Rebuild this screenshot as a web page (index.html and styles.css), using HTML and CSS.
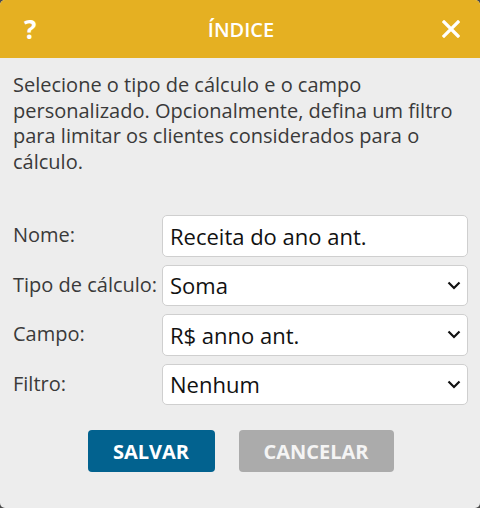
FILE: index.html
```html
<!DOCTYPE html>
<html lang="pt">
  <head>
    <meta charset="UTF-8" />
    <meta name="viewport" content="width=device-width, initial-scale=1.0" />
    <title>Índice</title>
    <link rel="stylesheet" href="styles.css">
  </head>
  <body>
    <div class="dialogo">
      <div class="cabecalho">
        <span class="ajuda">?</span>
        <span class="titulo">ÍNDICE</span>
        <span class="fechar">
          <svg width="18" height="18" viewBox="0 0 18 18">
            <path d="M2 2 L16 16 M16 2 L2 16" stroke="#fff" stroke-width="3.2" stroke-linecap="square" />
          </svg>
        </span>
      </div>
      <div class="conteudo">
        <p class="descricao">
          Selecione o tipo de cálculo e o campo personalizado. Opcionalmente, defina um filtro para limitar os clientes considerados para o cálculo.
        </p>
        <div class="formulario">
          <label for="nome">Nome:</label>
          <input type="text" id="nome" class="campo" value="Receita do ano ant." />

          <label for="tipo">Tipo de cálculo:</label>
          <select id="tipo" class="campo">
            <option>Soma</option>
          </select>

          <label for="campo">Campo:</label>
          <select id="campo" class="campo">
            <option>R$ anno ant.</option>
          </select>

          <label for="filtro">Filtro:</label>
          <select id="filtro" class="campo">
            <option>Nenhum</option>
          </select>
        </div>
        <div class="botoes">
          <button class="botao salvar">SALVAR</button>
          <button class="botao cancelar">CANCELAR</button>
        </div>
      </div>
    </div>
  </body>
</html>
```

FILE: styles.css
```css
* {
  margin: 0;
  padding: 0;
  box-sizing: border-box;
}
html, body {
  width: 480px;
  height: 508px;
  overflow: hidden;
}
body {
  background-color: #4a4a4a;
  font-family: "Open Sans", sans-serif;
}
.dialogo {
  width: 480px;
  height: 508px;
  background-color: #ededed;
  border-radius: 5px;
  overflow: hidden;
}
.cabecalho {
  height: 58px;
  background-color: #e5b022;
  color: white;
  display: flex;
  align-items: center;
  justify-content: space-between;
  padding: 0 20px 0 24px;
}
.ajuda {
  font-size: 26px;
  font-weight: 700;
  width: 18px;
  line-height: 1;
}
.titulo {
  font-size: 20px;
  font-weight: 600;
  padding-right: 2px;
}
.fechar {
  display: flex;
  width: 18px;
}
.conteudo {
  padding: 14px 12px 0 13px;
}
.descricao {
  font-size: 20px;
  line-height: 25.5px;
  color: #3a3a3a;
  margin-bottom: 41px;
  padding-right: 4px;
}
.formulario {
  display: grid;
  grid-template-columns: 149px 306px;
  row-gap: 8px;
  align-items: center;
}
.formulario label {
  font-size: 20px;
  color: #3a3a3a;
  margin-top: -2px;
}
.campo {
  height: 41.5px;
  width: 306px;
  background-color: white;
  border: 1px solid #cfcfcf;
  border-radius: 5px;
  font-family: "Open Sans", sans-serif;
  font-size: 22px;
  color: #111;
  padding: 0 7px;
}
select.campo {
  appearance: none;
  background-image: url("data:image/svg+xml;utf8,<svg xmlns='http://www.w3.org/2000/svg' width='14' height='9' viewBox='0 0 14 9'><path d='M1.5 1.5 L7 7 L12.5 1.5' fill='none' stroke='%23111' stroke-width='2.2'/></svg>");
  background-repeat: no-repeat;
  background-position: right 6px center;
}
.botoes {
  display: flex;
  justify-content: center;
  gap: 24px;
  margin-top: 25px;
}
.botao {
  height: 42px;
  border: none;
  border-radius: 4px;
  color: white;
  font-family: "Open Sans", sans-serif;
  font-size: 20px;
  font-weight: 700;
}
.salvar {
  width: 127px;
  background-color: #02628f;
}
.cancelar {
  width: 155px;
  background-color: #ababab;
  color: #f4f4f4;
}
```
